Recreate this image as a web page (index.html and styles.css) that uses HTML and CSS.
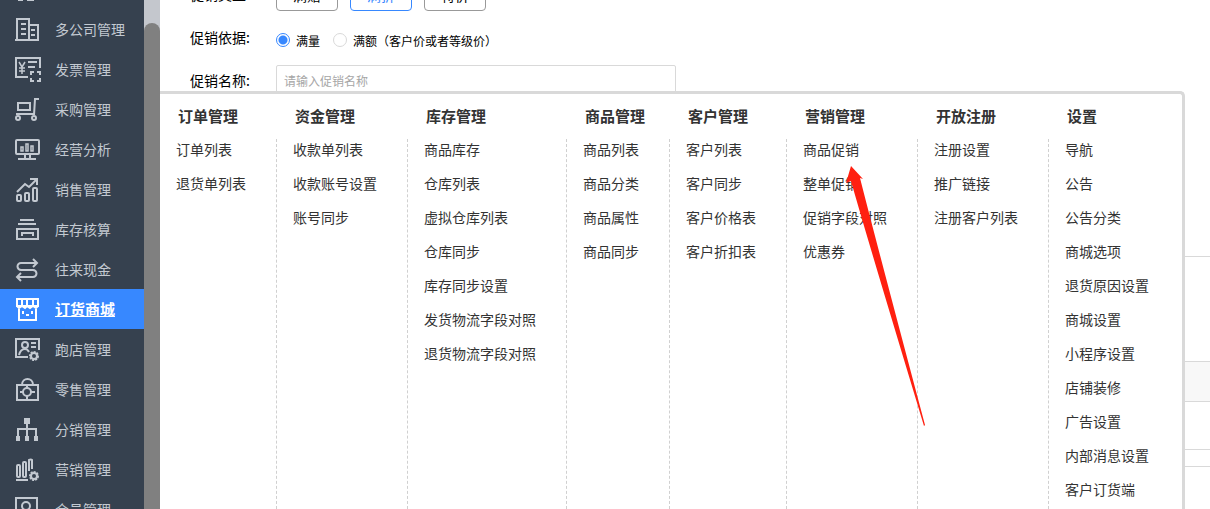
FILE: index.html
```
<!DOCTYPE html>
<html lang="zh-CN">
<head>
  <meta charset="UTF-8" />
  <meta name="viewport" content="width=device-width, initial-scale=1.0"/>
  <title>订货商城</title>
  <link rel="stylesheet" href="styles.css">
</head>
<body>
  <div class="app">
    <nav class="sidebar">
      <a class="nav-item" href="#">
        <svg class="icon" viewBox="0 0 28 28"><path d="M5 24h5M14 24h7"/></svg>
      </a>
      <a class="nav-item" href="#">
        <svg class="icon" viewBox="0 0 28 28"><path d="M4 24V3h12v21M16 9h9v15M2 24h24M8 8h5M8 13h5M8 18h5M18 14h4M18 19h4"/></svg>
        <span>多公司管理</span>
      </a>
      <a class="nav-item" href="#">
        <svg class="icon" viewBox="0 0 28 28"><path d="M15 21H3V2h24v10M15 6h9M15 11h7"/><path class="mid" d="M6 6l3 5 3-5M9 11v7M6 12h6M6 15h6"/><path d="M18 19v-3h3M24 16h3v3M18 22v3h3M24 25h3v-3"/></svg>
        <span>发票管理</span>
      </a>
      <a class="nav-item" href="#">
        <svg class="icon" viewBox="0 0 28 28"><path d="M5 7h12v7H5zM3 18h18M26 3h-4l-1 16"/><circle cx="5" cy="22" r="2"/><circle cx="21" cy="22" r="2"/></svg>
        <span>采购管理</span>
      </a>
      <a class="nav-item" href="#">
        <svg class="icon" viewBox="0 0 28 28"><rect x="3" y="4" width="23" height="14" rx="1"/><path d="M12 18v4M17 18v4M5 23h18"/><path class="mid" d="M8 11h2v4H8zM13 8h2v7h-2zM18 10h2v5h-2z"/></svg>
        <span>经营分析</span>
      </a>
      <a class="nav-item" href="#">
        <svg class="icon" viewBox="0 0 28 28"><rect x="4" y="19" width="4" height="6" rx="1"/><rect x="12" y="17" width="4" height="8" rx="1"/><rect x="20" y="12" width="4" height="13" rx="1"/><path d="M4 16l8-8 4 3 8-8M17 3h7v6"/></svg>
        <span>销售管理</span>
      </a>
      <a class="nav-item" href="#">
        <svg class="icon" viewBox="0 0 28 28"><path d="M7 4h14M5 8h18M4 13h21v10H4zM9 20v-3h11v3"/></svg>
        <span>库存核算</span>
      </a>
      <a class="nav-item" href="#">
        <svg class="icon" viewBox="0 0 28 28"><path d="M23 7H8a3 3 0 0 0 0 7h12a3 3 0 0 1 0 7H5M20 3l4 4-4 4M8 17l-4 4 4 4"/></svg>
        <span>往来现金</span>
      </a>
      <a class="nav-item active" href="#">
        <svg class="icon" viewBox="0 0 28 28"><path d="M4 3h21v7H4zM9 3v7M14 3v7M20 3v7M6 11v13h17V11M4 10l2 2 3-2 3 2 2-2 3 2 3-2 3 2 2-2M10 15v3M19 15v3M13 19h3"/></svg>
        <span>订货商城</span>
      </a>
      <a class="nav-item" href="#">
        <svg class="icon" viewBox="0 0 28 28"><path d="M15 21H3V3h23v11M6 19c1-4 3-6 6-6 2 0 3 1 4 3M18 7h5M18 11h5"/><circle cx="12" cy="9" r="3"/><circle cx="21" cy="20" r="3"/><circle class="teeth" cx="21" cy="20" r="4"/></svg>
        <span>跑店管理</span>
      </a>
      <a class="nav-item" href="#">
        <svg class="icon" viewBox="0 0 28 28"><path d="M4 9h21v15H4zM9 9c0-8 11-8 11 0M14 9v4M14 20v4M7 16h4M18 16h4"/><circle cx="14" cy="16" r="4"/></svg>
        <span>零售管理</span>
      </a>
      <a class="nav-item" href="#">
        <svg class="icon" viewBox="0 0 28 28"><path d="M5 20v-7h18v7M14 7v13"/><path class="solid" d="M11 2h6v6h-6zM3 20h4v5H3zM12 20h4v5h-4zM21 20h4v5h-4z"/></svg>
        <span>分销管理</span>
      </a>
      <a class="nav-item" href="#">
        <svg class="icon" viewBox="0 0 28 28"><path d="M3 24h12"/><rect x="4" y="9" width="3" height="12" rx="1"/><rect x="10" y="6" width="3" height="15" rx="1"/><path d="M16 15V4q2-1 3 0v9"/><circle cx="21" cy="20" r="3"/><circle class="teeth" cx="21" cy="20" r="4"/></svg>
        <span>营销管理</span>
      </a>
      <a class="nav-item" href="#">
        <svg class="icon" viewBox="0 0 28 28"><path d="M3 26V2h21v24"/><circle cx="13" cy="10" r="4"/></svg>
        <span>会员管理</span>
      </a>
    </nav>

    <div class="scroll-track"><div class="scroll-thumb"></div></div>

    <main class="main">
      <form class="promo-form">
        <div class="form-row">
          <span class="form-label">促销类型:</span>
          <div class="type-buttons">
            <button type="button">满赠</button>
            <button type="button" class="selected">满折</button>
            <button type="button">特价</button>
          </div>
        </div>
        <div class="form-row">
          <span class="form-label">促销依据:</span>
          <div class="radios">
            <label><input type="radio" name="basis" checked>满量</label>
            <label><input type="radio" name="basis">满额（客户价或者等级价）</label>
          </div>
        </div>
        <div class="form-row">
          <label class="form-label" for="promo-name">促销名称:</label>
          <input type="text" id="promo-name" placeholder="请输入促销名称">
        </div>
      </form>
      <div class="goods">
        <div class="goods-toolbar"></div>
        <div class="goods-head"></div>
        <div class="goods-body"></div>
        <div class="goods-foot"></div>
      </div>
    </main>
  </div>

  <div class="mega-menu">
    <section class="menu-col">
      <h2>订单管理</h2>
      <div class="links">
        <a href="#">订单列表</a>
        <a href="#">退货单列表</a>
      </div>
    </section>
    <section class="menu-col">
      <h2>资金管理</h2>
      <div class="links">
        <a href="#">收款单列表</a>
        <a href="#">收款账号设置</a>
        <a href="#">账号同步</a>
      </div>
    </section>
    <section class="menu-col">
      <h2>库存管理</h2>
      <div class="links">
        <a href="#">商品库存</a>
        <a href="#">仓库列表</a>
        <a href="#">虚拟仓库列表</a>
        <a href="#">仓库同步</a>
        <a href="#">库存同步设置</a>
        <a href="#">发货物流字段对照</a>
        <a href="#">退货物流字段对照</a>
      </div>
    </section>
    <section class="menu-col">
      <h2>商品管理</h2>
      <div class="links">
        <a href="#">商品列表</a>
        <a href="#">商品分类</a>
        <a href="#">商品属性</a>
        <a href="#">商品同步</a>
      </div>
    </section>
    <section class="menu-col">
      <h2>客户管理</h2>
      <div class="links">
        <a href="#">客户列表</a>
        <a href="#">客户同步</a>
        <a href="#">客户价格表</a>
        <a href="#">客户折扣表</a>
      </div>
    </section>
    <section class="menu-col">
      <h2>营销管理</h2>
      <div class="links">
        <a href="#">商品促销</a>
        <a href="#">整单促销</a>
        <a href="#">促销字段对照</a>
        <a href="#">优惠券</a>
      </div>
    </section>
    <section class="menu-col">
      <h2>开放注册</h2>
      <div class="links">
        <a href="#">注册设置</a>
        <a href="#">推广链接</a>
        <a href="#">注册客户列表</a>
      </div>
    </section>
    <section class="menu-col">
      <h2>设置</h2>
      <div class="links">
        <a href="#">导航</a>
        <a href="#">公告</a>
        <a href="#">公告分类</a>
        <a href="#">商城选项</a>
        <a href="#">退货原因设置</a>
        <a href="#">商城设置</a>
        <a href="#">小程序设置</a>
        <a href="#">店铺装修</a>
        <a href="#">广告设置</a>
        <a href="#">内部消息设置</a>
        <a href="#">客户订货端</a>
      </div>
    </section>
  </div>

  <svg class="arrow" viewBox="0 0 80 262" aria-hidden="true">
    <path d="M5 0L17 13l-3-1Q30 75 79 259l-1 1Q22 75 5 15l-5 2z"/>
  </svg>
</body>
</html>
```

FILE: styles.css
```
:root {
  --side-bg: #36414f;
  --side-text: #c3c9d1;
  --blue: #3788ff;
  --line: #d9d9d9;
  --text: #333;
}

* {
  box-sizing: border-box;
}

body {
  margin: 0;
  height: 100vh;
  overflow: hidden;
  position: relative;
  background: #fff;
  color: #000;
  font-family: "Noto Sans CJK SC", sans-serif;
  font-size: 14px;
}

a {
  color: inherit;
  text-decoration: none;
}

.app {
  display: flex;
  height: 100%;
  overflow: hidden;
}

/* Sidebar */
.sidebar {
  width: 144px;
  flex: none;
  margin-top: -31px;
  background: var(--side-bg);
  color: var(--side-text);
}

.nav-item {
  display: flex;
  align-items: flex-start;
  gap: 14px;
  height: 40px;
  padding: 7px 0 5px 13px;
  line-height: 26px;
}

.nav-item.active {
  background: var(--blue);
  color: #fff;
  font-size: 15px;
  font-weight: 700;
}

.nav-item.active span {
  text-decoration: underline;
}

.icon {
  width: 28px;
  height: 28px;
  flex: none;
  fill: none;
  stroke: currentColor;
  stroke-width: 2;
}

.icon .mid {
  stroke-width: 1.5;
}

.icon .solid {
  fill: currentColor;
  stroke: none;
}

.icon .teeth {
  stroke-dasharray: 2 1;
}

.scroll-track {
  width: 16px;
  flex: none;
  padding-top: 23px;
  background: #c4c7cd;
}

.scroll-thumb {
  height: 100%;
  border-radius: 8px 8px 0 0;
  background: #808080;
}

/* Promotion form */
.main {
  flex: 1;
  min-width: 0;
}

.promo-form {
  display: flex;
  flex-direction: column;
  gap: 11px;
  margin-top: -21px;
  padding-left: 30px;
}

.form-row {
  display: flex;
  height: 32px;
}

.form-label {
  width: 86px;
  line-height: 30px;
}

.type-buttons {
  display: flex;
  gap: 12px;
}

.type-buttons button {
  width: 62px;
  border: 1px solid #999;
  border-radius: 4px;
  background: #fff;
  color: #000;
  font: inherit;
}

.type-buttons .selected {
  border-color: var(--blue);
  color: var(--blue);
}

.radios {
  display: flex;
  gap: 13px;
  padding-top: 4px;
  font-size: 12px;
}

.radios label {
  display: flex;
  align-items: center;
  gap: 6px;
}

.radios input {
  appearance: none;
  width: 14px;
  height: 14px;
  margin: 0;
  border: 1px solid var(--line);
  border-radius: 50%;
  background: #fff;
}

.radios input:checked {
  border-color: var(--blue);
  background: radial-gradient(circle, var(--blue) 4px, #fff 5px);
}

#promo-name {
  width: 400px;
  padding: 0 7px 2px;
  border: 1px solid var(--line);
  border-radius: 2px;
  font: inherit;
  font-size: 12px;
}

#promo-name::placeholder {
  color: #a6a6a6;
}

.goods {
  margin-top: 159px;
  border-top: 1px solid var(--line);
}

.goods-toolbar {
  height: 104px;
}

.goods-head {
  height: 41px;
  border: 1px solid var(--line);
  border-width: 1px 0;
  background: #f8f8f8;
}

.goods-body {
  height: 48px;
  border-bottom: 1px solid var(--line);
}

.goods-foot {
  height: 17px;
  border-bottom: 1px solid var(--line);
}

/* Menu that opens beside the sidebar */
.mega-menu {
  position: absolute;
  top: 91px;
  bottom: 0;
  left: 160px;
  display: flex;
  padding-right: 3px;
  border: 3px solid var(--line);
  border-width: 3px 3px 0 0;
  border-radius: 0 5px 0 0;
  background: #fff;
  color: var(--text);
  overflow: hidden;
}

.menu-col {
  display: flex;
  flex-direction: column;
}

.menu-col h2 {
  width: 0;
  margin: 0;
  padding: 0 0 2px 18px;
  font-size: 15px;
  line-height: 43px;
  white-space: nowrap;
}

.links {
  flex: 1;
  display: flex;
  flex-direction: column;
  gap: 14px;
  padding: 0 30px 0 16px;
  border-right: 1px dashed #d0d0d0;
  white-space: nowrap;
}

.menu-col:last-child .links {
  border-right: none;
}

.links a {
  line-height: 20px;
}

/* Pointer to the goods promotion link */
.arrow {
  position: absolute;
  top: 166px;
  left: 846px;
  width: 80px;
  height: 262px;
  fill: #ff2010;
}
```
